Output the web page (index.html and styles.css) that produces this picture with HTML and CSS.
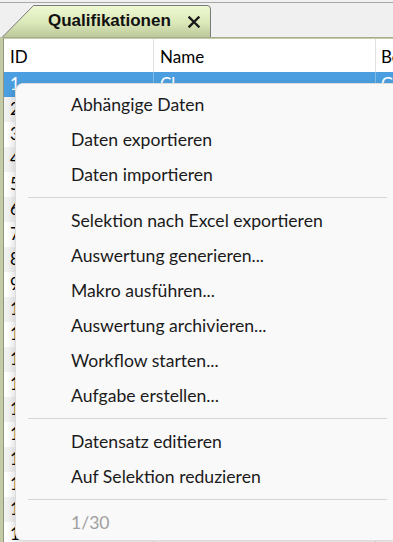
FILE: index.html
```html
<!DOCTYPE html>
<html lang="de">
<head>
<meta charset="utf-8">
<link rel="stylesheet" href="styles.css">
</head>
<body>
<div class="app">
  <div class="tabstrip">
    <div class="tab">
      <svg class="tab-bg" width="212" height="34" viewBox="0 0 212 34">
        <defs>
          <linearGradient id="tg" x1="0" y1="0" x2="0" y2="1">
            <stop offset="0" stop-color="#eef9d2"/>
            <stop offset="0.55" stop-color="#dbe8b8"/>
            <stop offset="1" stop-color="#bcc89a"/>
          </linearGradient>
        </defs>
        <path d="M0.5,34 L31.5,2.5 L205,2.5 Q208.5,2.5 208.5,6 L208.5,34 Z" fill="url(#tg)"/>
        <path d="M0.5,34 L31.5,2.5 L205,2.5 Q208.5,2.5 208.5,6 L208.5,34" fill="none" stroke="#7a7a7a" stroke-width="1"/>
      </svg>
      <div class="tab-label">
        <span class="tab-title">Qualifikationen</span>
        <svg class="tab-close" width="12" height="12" viewBox="0 0 12 12">
          <path d="M1.5,1.5 L10.5,10.5 M10.5,1.5 L1.5,10.5" stroke="#1a1a1a" stroke-width="2.4" stroke-linecap="square"/>
        </svg>
      </div>
    </div>
  </div>
  <div class="panel">
    <div class="grid">
      <div class="row head">
        <div class="cell c-id">ID</div>
        <div class="cell c-name">Name</div>
        <div class="cell c-be">Be</div>
      </div>
      <div class="row sel">
        <div class="cell c-id">1</div>
        <div class="cell c-name">Cl</div>
        <div class="cell c-be">G</div>
      </div>
      <div class="row alt"><div class="cell c-id">2</div><div class="cell c-name"></div><div class="cell c-be"></div></div>
      <div class="row"><div class="cell c-id">3</div><div class="cell c-name"></div><div class="cell c-be"></div></div>
      <div class="row alt"><div class="cell c-id">4</div><div class="cell c-name"></div><div class="cell c-be"></div></div>
      <div class="row"><div class="cell c-id">5</div><div class="cell c-name"></div><div class="cell c-be"></div></div>
      <div class="row alt"><div class="cell c-id">6</div><div class="cell c-name"></div><div class="cell c-be"></div></div>
      <div class="row"><div class="cell c-id">7</div><div class="cell c-name"></div><div class="cell c-be"></div></div>
      <div class="row alt"><div class="cell c-id">8</div><div class="cell c-name"></div><div class="cell c-be"></div></div>
      <div class="row"><div class="cell c-id">9</div><div class="cell c-name"></div><div class="cell c-be"></div></div>
      <div class="row alt"><div class="cell c-id">10</div><div class="cell c-name"></div><div class="cell c-be"></div></div>
      <div class="row"><div class="cell c-id">11</div><div class="cell c-name"></div><div class="cell c-be"></div></div>
      <div class="row alt"><div class="cell c-id">12</div><div class="cell c-name"></div><div class="cell c-be"></div></div>
      <div class="row"><div class="cell c-id">13</div><div class="cell c-name"></div><div class="cell c-be"></div></div>
      <div class="row alt"><div class="cell c-id">14</div><div class="cell c-name"></div><div class="cell c-be"></div></div>
      <div class="row"><div class="cell c-id">15</div><div class="cell c-name"></div><div class="cell c-be"></div></div>
      <div class="row alt"><div class="cell c-id">16</div><div class="cell c-name"></div><div class="cell c-be"></div></div>
      <div class="row"><div class="cell c-id">17</div><div class="cell c-name"></div><div class="cell c-be"></div></div>
      <div class="row alt"><div class="cell c-id">18</div><div class="cell c-name"></div><div class="cell c-be"></div></div>
      <div class="row"><div class="cell c-id">19</div><div class="cell c-name"></div><div class="cell c-be"></div></div>
    </div>

    <div class="menu">
      <div class="item">Abhängige Daten</div>
      <div class="item">Daten exportieren</div>
      <div class="item">Daten importieren</div>
      <div class="sep"></div>
      <div class="item">Selektion nach Excel exportieren</div>
      <div class="item">Auswertung generieren...</div>
      <div class="item">Makro ausführen...</div>
      <div class="item">Auswertung archivieren...</div>
      <div class="item">Workflow starten...</div>
      <div class="item">Aufgabe erstellen...</div>
      <div class="sep"></div>
      <div class="item">Datensatz editieren</div>
      <div class="item">Auf Selektion reduzieren</div>
      <div class="sep"></div>
      <div class="item disabled">1/30</div>
    </div>
  </div>
</div>
</body>
</html>
```
FILE: styles.css
```css
html, body {
  margin: 0;
  padding: 0;
}
body {
  width: 393px;
  height: 542px;
  overflow: hidden;
  background: #f0f0f0;
  font-family: Lato, "Open Sans", sans-serif;
  color: #000;
}
.app {
  display: flex;
  flex-direction: column;
  height: 542px;
}
.tabstrip {
  height: 34px;
  border-top: 1px solid #a8a8a8;
  margin-top: 2px;
  background: #f0f0f0;
  display: flex;
  align-items: flex-end;
  padding-left: 2px;
}
.tab {
  display: grid;
  width: 212px;
  height: 34px;
}
.tab-bg {
  grid-area: 1 / 1;
  display: block;
}
.tab-label {
  grid-area: 1 / 1;
  display: flex;
  align-items: center;
  padding-left: 46px;
  padding-top: 2px;
}
.tab-title {
  font-family: "Liberation Sans", Arial, sans-serif;
  font-weight: bold;
  font-size: 17px;
  color: #111;
}
.tab-close {
  margin-left: 17px;
  margin-top: 1px;
}
.panel {
  flex: 1;
  position: relative;
  border-top: 1px solid #a4ac90;
  border-left: 3px solid #c3cba6;
  background: #fff;
}
.grid {
  border-left: 1px solid #8f9580;
  border-top: 1px solid #c4cca8;
  height: 100%;
  background: #fff;
}
.row {
  display: grid;
  grid-template-columns: 150px 222px 1fr;
  height: 25px;
  font-family: Lato, "Open Sans", sans-serif;
  font-size: 17px;
  line-height: 23px;
}
.row.head {
  height: 33px;
  line-height: 36px;
}
.row.alt {
  background: #f2f2f2;
}
.row.sel {
  background: #4b9fe0;
  color: #fff;
}
.cell {
  padding-left: 6px;
  border-right: 1px solid #e2e2e2;
  overflow: hidden;
  white-space: nowrap;
}
.c-be {
  padding-left: 5px;
}
.row.sel .cell {
  border-right-color: #7fbcea;
}
.cell.c-be {
  border-right: none;
}
.menu {
  position: absolute;
  left: 12px;
  top: 45px;
  width: 385px;
  height: 458px;
  box-sizing: border-box;
  background: #f9f9f9;
  border: 1px solid #dcdcdc;
  border-radius: 8px;
  box-shadow: -1px 3px 8px rgba(0, 0, 0, 0.16);
  padding-top: 3px;
  font-family: Lato, "Open Sans", sans-serif;
  font-size: 17.6px;
  color: #1b1b1b;
}
.item {
  height: 35px;
  line-height: 35px;
  padding-left: 55px;
  white-space: nowrap;
}
.item.disabled {
  color: #a0a0a0;
}
.sep {
  height: 1px;
  margin: 5px 12px 5px 12px;
  background: #d6d6d6;
}
```
